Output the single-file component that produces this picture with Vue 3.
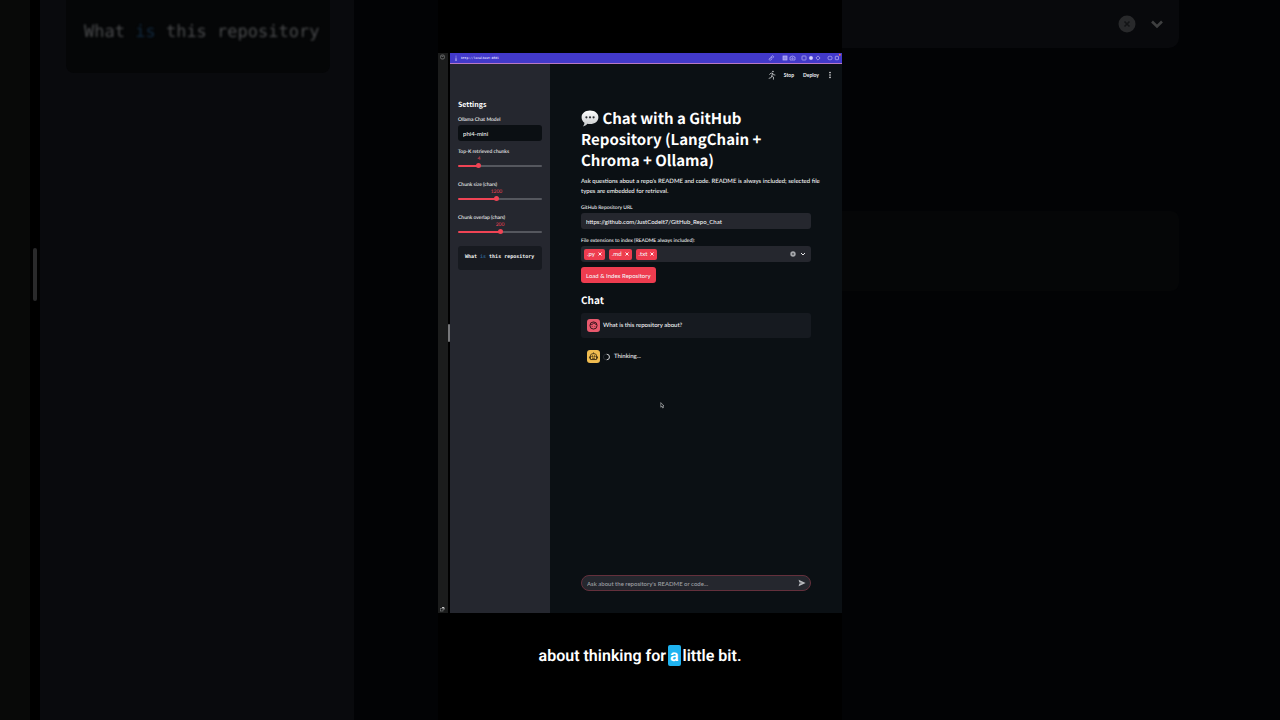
<script setup>
import { reactive, ref } from 'vue'

const model = ref('phi4-mini')
const repoUrl = ref('https://github.com/JustCodeIt7/GitHub_Repo_Chat')
const question = ref('')
const extensions = ref(['.py', '.md', '.txt'])

const sliders = reactive([
  { id: 'top-k', label: 'Top-K retrieved chunks', min: 1, max: 14, step: 1, value: 4 },
  { id: 'chunk-size', label: 'Chunk size (chars)', min: 200, max: 2400, step: 100, value: 1200 },
  { id: 'overlap', label: 'Chunk overlap (chars)', min: 0, max: 400, step: 10, value: 200 },
])

const fraction = (s) => (s.value - s.min) / (s.max - s.min)
const removeExtension = (ext) => {
  extensions.value = extensions.value.filter((e) => e !== ext)
}
</script>

<template>
  <div class="stage">
    <div class="backdrop left" aria-hidden="true">
      <div class="b-rail"></div>
      <div class="b-gap"><span class="b-handle"></span></div>
      <div class="b-side">
        <div class="b-code"><span class="b-text">What <span class="b-key">is</span> this repository</span></div>
      </div>
      <div class="b-rest"></div>
    </div>

    <div class="video">
      <div class="screen">
        <div class="rail">
          <svg class="rail-icon" viewBox="0 0 8 8"><rect x="1.500" y="2" width="4" height="4" rx="1.500" fill="none" stroke="#77787a" stroke-width=".8" /><path d="M2.500 3.500h2" stroke="#77787a" stroke-width=".7" /></svg>
          <svg class="rail-icon" viewBox="0 0 8 8"><rect x="1.500" y="3.500" width="2.500" height="2.500" fill="none" stroke="#77787a" stroke-width=".7" /><path d="M3 2.500h2v2" fill="none" stroke="#dcdcdc" stroke-width=".9" /></svg>
        </div>
        <div class="gap"><span class="handle"></span></div>
        <div class="browser">
          <div class="urlbar">
            <svg class="info" viewBox="0 0 6 8"><path d="M3 1v1M3 3.300V7M2 7h2" stroke="#e4e0ff" stroke-width=".9" fill="none" /></svg>
            <span class="address">http://localhost:8501</span>
            <svg class="bar-icons" viewBox="0 0 74 10" fill="none" stroke="#bdb8f8" stroke-width=".7">
              <path d="M2 5.800 3.800 4M2.600 4.400l-1.200 1.200c-.9.9.5 2.300 1.400 1.400L4 5.800M3.200 5.200l1.200-1.200M2.200 3.800" /><path d="M3 3.900l.9-.9c.9-.9 2.300.5 1.400 1.400l-.9.9" />
              <rect x="15" y="3" width="4" height="4" fill="#8f88ec" />
              <path d="M22 4h1l.6-.9h1.800l.6.9h1v3h-5z" /><circle cx="24.500" cy="5.400" r=".7" />
              <rect x="34" y="3" width="4" height="4" rx=".6" />
              <circle cx="43" cy="5" r="1.700" fill="#d3cffc" />
              <path d="m50 2.900 2.100 2.100L50 7.100 47.900 5z" />
              <rect x="60" y="3.300" width="4" height="3.400" rx="1.400" />
              <rect x="67.300" y="3.300" width="3.200" height="3.400" rx=".5" />
              <circle cx="71.800" cy="1.800" r="1" fill="#ff744c" stroke="none" />
            </svg>
          </div>

          <div class="app">
            <aside class="sidebar">
              <h2>Settings</h2>
              <label class="label" for="model">Ollama Chat Model</label>
              <input id="model" v-model="model" class="dark-input" type="text" />
              <div v-for="s in sliders" :key="s.id" class="slider" :style="{ '--f': fraction(s) }">
                <label class="label" :for="s.id">{{ s.label }}</label>
                <div class="value-row"><output :for="s.id">{{ s.value }}</output></div>
                <input :id="s.id" v-model.number="s.value" type="range" :min="s.min" :max="s.max" :step="s.step" />
              </div>
              <pre class="code"><code>What <span>is</span> this repository</code></pre>
            </aside>

            <main class="main">
              <div class="toolbar">
                <svg class="runner" viewBox="0 0 10 12" fill="none" stroke="#c9cbce" stroke-width="1" stroke-linecap="round" stroke-linejoin="round">
                  <circle cx="6.200" cy="1.600" r="1" fill="#c9cbce" stroke="none" />
                  <path d="M2 5.200 3.800 3.600l2 .3L4.800 7l2 1.500v2.800M4.600 7.200 4 9.200l-2.600.9M5.800 4l1 1.700 1.900.3" />
                </svg>
                <button type="button">Stop</button>
                <button type="button">Deploy</button>
                <button type="button" class="kebab" aria-label="Menu">
                  <svg viewBox="0 0 4 8" fill="#e6e7e8"><circle cx="2" cy="1.600" r=".8" /><circle cx="2" cy="4" r=".8" /><circle cx="2" cy="6.400" r=".8" /></svg>
                </button>
              </div>

              <div class="content">
                <h1>
                  <svg class="bubble" viewBox="0 0 18 17">
                    <defs><linearGradient id="bub" x1="0" y1="0" x2="0" y2="1"><stop offset="0" stop-color="#fff" /><stop offset="1" stop-color="#c6c9cb" /></linearGradient></defs>
                    <path d="M9 .5c4.900 0 8.400 2.800 8.400 6.800S13.900 14.100 9 14.100c-1 0-1.800-.1-2.600-.3C5.300 15.200 3.600 16.200 1.800 16.400c1-.9 1.600-2.100 1.600-3.700C1.600 11.500.6 9.600.6 7.300.6 3.300 4.100.5 9 .5z" fill="url(#bub)" />
                    <g fill="#2c3034"><circle cx="5.400" cy="7.300" r="1.100" /><circle cx="9" cy="7.300" r="1.100" /><circle cx="12.600" cy="7.300" r="1.100" /></g>
                  </svg>
                  Chat with a GitHub<br />Repository (LangChain +<br />Chroma + Ollama)
                </h1>
                <p class="intro">Ask questions about a repo's README and code. README is always included; selected file<br />types are embedded for retrieval.</p>

                <label class="label" for="repo">GitHub Repository URL</label>
                <input id="repo" v-model="repoUrl" class="field" type="text" />

                <span id="ext-label" class="label second">File extensions to index (README always included):</span>
                <div class="field multi" role="group" aria-labelledby="ext-label">
                  <span v-for="ext in extensions" :key="ext" class="tag">
                    {{ ext }}
                    <button type="button" :aria-label="`Remove ${ext}`" @click="removeExtension(ext)">
                      <svg viewBox="0 0 4 4"><path d="M.5.5l3 3M3.500.5l-3 3" stroke="#fff" stroke-width=".9" /></svg>
                    </button>
                  </span>
                  <button type="button" class="clear" aria-label="Clear all" @click="extensions = []">
                    <svg viewBox="0 0 6 6"><circle cx="3" cy="3" r="2.700" fill="#a6a8ac" /><path d="M2 2l2 2M4 2 2 4" stroke="#4a4c52" stroke-width=".7" /></svg>
                  </button>
                  <button type="button" class="open" aria-label="Open">
                    <svg viewBox="0 0 6 6"><path d="M1 2l2 2 2-2" fill="none" stroke="#e6e7e8" stroke-width="1" /></svg>
                  </button>
                </div>

                <button type="button" class="primary">Load &amp; Index Repository</button>

                <h2 class="chat-title">Chat</h2>
                <div class="message user">
                  <span class="avatar red">
                    <svg viewBox="0 0 12 12" fill="none" stroke="#3a151c" stroke-width=".9"><circle cx="6" cy="6" r="3.300" /><path d="M2.900 5.200c1.700.2 2.800-.5 3.400-1.700.7 1 1.600 1.500 2.900 1.500" /><path d="M4.800 6.600v.5M7.200 6.600v.5" /></svg>
                  </span>
                  <span>What is this repository about?</span>
                </div>
                <div class="message">
                  <span class="avatar amber">
                    <svg viewBox="0 0 12 12" fill="none" stroke="#463414" stroke-width=".9"><path d="M3.200 8.800V5.300c0-1.300 1-1.900 2.800-1.900s2.800.6 2.800 1.900v3.500zM6 3.400V2.300M2.300 6v1.800M9.700 6v1.800" /><circle cx="4.900" cy="5.800" r=".5" /><circle cx="7.100" cy="5.800" r=".5" /><path d="M4.700 7.600h2.600" /></svg>
                  </span>
                  <svg class="spinner" viewBox="0 0 8 8" fill="none"><circle cx="3.200" cy="4" r="2.800" stroke="#2b2f34" stroke-width=".9" /><path d="M3.700 1.200a2.800 2.800 0 0 1 0 5.600" stroke="#d6d7d9" stroke-width=".9" /></svg>
                  <span>Thinking...</span>
                </div>

                <form class="ask" @submit.prevent>
                  <input v-model="question" type="text" aria-label="Question" placeholder="Ask about the repository's README or code..." />
                  <button type="submit" aria-label="Send">
                    <svg viewBox="0 0 8 8"><path d="M.6.8 7.600 4 .6 7.200l.8-2.700L4.200 4 1.400 3.500z" fill="#b9bbbf" /></svg>
                  </button>
                </form>
              </div>
            </main>
          </div>
        </div>
        <svg class="cursor" viewBox="0 0 5 7"><path d="M.8.6v4.600l1.100-.9.8 1.700.8-.4-.8-1.600h1.300z" fill="#0b0f13" stroke="#c8c9cb" stroke-width=".6" /></svg>
      </div>
      <p class="caption">about thinking for <mark>a</mark> little bit.</p>
    </div>

    <div class="backdrop right" aria-hidden="true">
      <div class="b-select">
        <svg class="b-clear" viewBox="0 0 18 18"><circle cx="9" cy="9" r="8.500" fill="#28292b" /><path d="m6.500 6.500 5 5m0-5-5 5" stroke="#131416" stroke-width="1.600" /></svg>
        <svg class="b-chevron" viewBox="0 0 14 14"><path d="m2 4.500 5 5 5-5" fill="none" stroke="#3e3f40" stroke-width="2.600" /></svg>
      </div>
      <div class="b-message"></div>
    </div>
  </div>
</template>

<style>
body {
  margin: 0;
  background: #000;
}
</style>

<style scoped>
* {
  box-sizing: border-box;
}
svg {
  display: block;
  flex: none;
}
button,
input {
  font: inherit;
  color: inherit;
  border: 0;
  padding: 0;
  margin: 0;
  background: none;
  outline: none;
  min-width: 0;
}
.stage {
  display: grid;
  grid-template-columns: 438fr 404fr 438fr;
  min-height: 100vh;
  background: #000;
  color: #f4f5f6;
  font-family: Lato, "Open Sans", sans-serif;
  font-size: 6px;
  font-weight: 500;
  text-rendering: geometricPrecision;
}

.backdrop {
  background: #020305;
  overflow: hidden;
}
.left {
  display: grid;
  grid-template-columns: 30px 10px 314px 1fr;
}
.b-rail {
  background: #080908;
}
.b-gap {
  background: #000;
  padding: 248px 3px 0;
}
.b-handle {
  display: block;
  height: 53px;
  border-radius: 2px;
  background: #29292a;
}
.b-side {
  background: #090a0d;
  padding: 0 24px 0 26px;
}
.b-code {
  height: 73px;
  padding: 17px 0 0 18px;
  border-radius: 0 0 8px 8px;
  background: #050607;
  color: #4a4b4d;
  font: 400 17px/30px "DejaVu Sans Mono", monospace;
  white-space: nowrap;
}
.b-text {
  filter: blur(1px);
}
.b-key {
  color: #12293f;
}
.b-select {
  display: flex;
  align-items: center;
  justify-content: flex-end;
  gap: 14px;
  height: 48px;
  width: 77%;
  padding-right: 15px;
  border-radius: 0 0 10px 0;
  background: #08090c;
}
.b-clear {
  width: 18px;
  height: 18px;
}
.b-chevron {
  width: 14px;
  height: 14px;
}
.b-message {
  width: 77%;
  height: 80px;
  margin-top: 163px;
  border-radius: 0 8px 8px 0;
  background: #050607;
}

.video {
  display: flex;
  flex-direction: column;
  padding-top: 53px;
  min-width: 0;
}
.screen {
  position: relative;
  display: grid;
  grid-template-columns: 10px 2px 1fr;
  min-height: 560px;
}
.rail {
  display: flex;
  flex-direction: column;
  justify-content: space-between;
  align-items: center;
  background: #1b1c1c;
}
.rail-icon {
  width: 8px;
  height: 8px;
}
.gap {
  display: flex;
  align-items: center;
}
.handle {
  width: 2px;
  height: 18px;
  border-radius: 1px;
  background: #77787a;
}
.browser {
  display: flex;
  flex-direction: column;
  min-width: 0;
}
.urlbar {
  display: flex;
  align-items: center;
  height: 11px;
  padding-left: 3px;
  background: #4239ca;
  border-bottom: 1px solid #b878c4;
}
.info {
  width: 6px;
  height: 6px;
}
.address {
  flex: 1;
  padding-left: 2px;
  font: 700 3px/6px "DejaVu Sans Mono", monospace;
  color: #dedbff;
}
.bar-icons {
  width: 74px;
  height: 10px;
}
.app {
  display: grid;
  grid-template-columns: 100px 1fr;
  flex: 1;
}
.sidebar {
  padding: 35px 8px 0;
  background: #25272f;
}
h1,
h2,
p,
pre {
  margin: 0;
}
h1,
h2 {
  font-family: "Noto Sans CJK JP", "Noto Sans", sans-serif;
  font-weight: 700;
  color: #fff;
}
.sidebar h2 {
  font-size: 7px;
  line-height: 12px;
}
.label {
  display: block;
  font-size: 5px;
  line-height: 8px;
  white-space: nowrap;
}
.sidebar h2 + .label {
  margin-top: 5px;
}
.dark-input {
  display: block;
  width: 100%;
  height: 16px;
  margin-top: 1px;
  padding: 0 5px;
  border-radius: 3px;
  background: #0b0f13;
}
.slider {
  margin-top: 7px;
  height: 26px;
}
.value-row {
  position: relative;
  height: 6px;
}
.value-row output {
  position: absolute;
  left: calc(3px + var(--f) * (100% - 6px));
  bottom: 0;
  transform: translateX(-50%);
  line-height: 6px;
  font-size: 5px;
  font-weight: 400;
  color: #f04455;
}
.slider input {
  appearance: none;
  display: block;
  width: 100%;
  height: 8px;
}
.slider input::-webkit-slider-runnable-track {
  height: 2px;
  border-radius: 1px;
  background: linear-gradient(to right, #f04455 calc(3px + var(--f) * (100% - 6px)), #55575e 0);
}
.slider input::-webkit-slider-thumb {
  appearance: none;
  width: 5px;
  height: 5px;
  margin-top: -2px;
  border-radius: 50%;
  background: #f04455;
}
.code {
  height: 24px;
  margin-top: 6px;
  padding: 0 0 0 7px;
  border-radius: 3px;
  background: #171a20;
  font: 700 5px/22px "DejaVu Sans Mono", monospace;
}
.code code {
  font: inherit;
}
.code span {
  color: #2c5f8c;
}

.main {
  display: flex;
  flex-direction: column;
  background: #0b1014;
  min-width: 0;
}
.toolbar {
  display: flex;
  align-items: center;
  justify-content: flex-end;
  height: 21px;
  padding-right: 10px;
}
.runner {
  width: 8px;
  height: 10px;
  margin-right: 8px;
}
.toolbar button {
  font-size: 5px;
  font-weight: 700;
}
.toolbar button + button {
  margin-left: 9px;
}
.kebab svg {
  width: 4px;
  height: 8px;
}
.content {
  display: flex;
  flex-direction: column;
  flex: 1;
  padding: 23px 31px 22px;
}
h1 {
  font-size: 15px;
  line-height: 21px;
  white-space: nowrap;
}
.bubble {
  display: inline-block;
  width: 18px;
  height: 17px;
  vertical-align: -3px;
}
.intro {
  margin: 6px 0 7px;
  line-height: 10px;
  white-space: nowrap;
}
.field {
  width: 100%;
  height: 16px;
  margin-top: 1px;
  padding: 0 5px;
  border-radius: 3px;
  background: #25272e;
}
.second {
  margin-top: 8px;
}
.multi {
  display: flex;
  align-items: center;
  gap: 4px;
  padding: 0 5px 0 3px;
}
.tag {
  display: flex;
  align-items: center;
  gap: 3px;
  height: 11px;
  padding: 0 3px;
  border-radius: 2px;
  background: #ee3c4f;
  line-height: 11px;
}
.tag svg {
  width: 4px;
  height: 4px;
}
.clear {
  margin-left: auto;
}
.clear svg,
.open svg {
  width: 6px;
  height: 6px;
}
.primary {
  align-self: flex-start;
  height: 16px;
  margin-top: 5px;
  padding: 0 5px;
  border-radius: 3px;
  background: #ee3c4f;
}
.chat-title {
  margin: 9px 0 6px;
  font-size: 10px;
  line-height: 15px;
}
.message {
  display: flex;
  align-items: center;
  gap: 3px;
  height: 25px;
  padding-left: 6px;
  border-radius: 3px;
}
.user {
  margin-bottom: 6px;
  background: #161a20;
}
.avatar {
  width: 13px;
  height: 13px;
  border-radius: 3px;
}
.red {
  background: #e8596d;
}
.amber {
  background: #f0bc50;
}
.spinner {
  width: 8px;
  height: 8px;
}
.ask {
  display: flex;
  align-items: center;
  height: 16px;
  margin-top: auto;
  padding: 0 4px 0 5px;
  border: 1px solid #64303c;
  border-radius: 8px;
  background: #25272e;
}
.ask input {
  flex: 1;
}
.ask input::placeholder {
  color: #a0a2a7;
  opacity: 1;
}
.ask svg {
  width: 8px;
  height: 8px;
}
.cursor {
  position: absolute;
  left: 55%;
  top: 349px;
  width: 5px;
  height: 7px;
}
.caption {
  margin-top: 33px;
  text-align: center;
  font: 600 16px/20px Roboto, sans-serif;
  color: #fff;
}
.caption mark {
  padding: 1px 2px;
  margin: 0 -2px;
  border-radius: 2px;
  background: #1fb3f0;
  color: #fff;
}
</style>
